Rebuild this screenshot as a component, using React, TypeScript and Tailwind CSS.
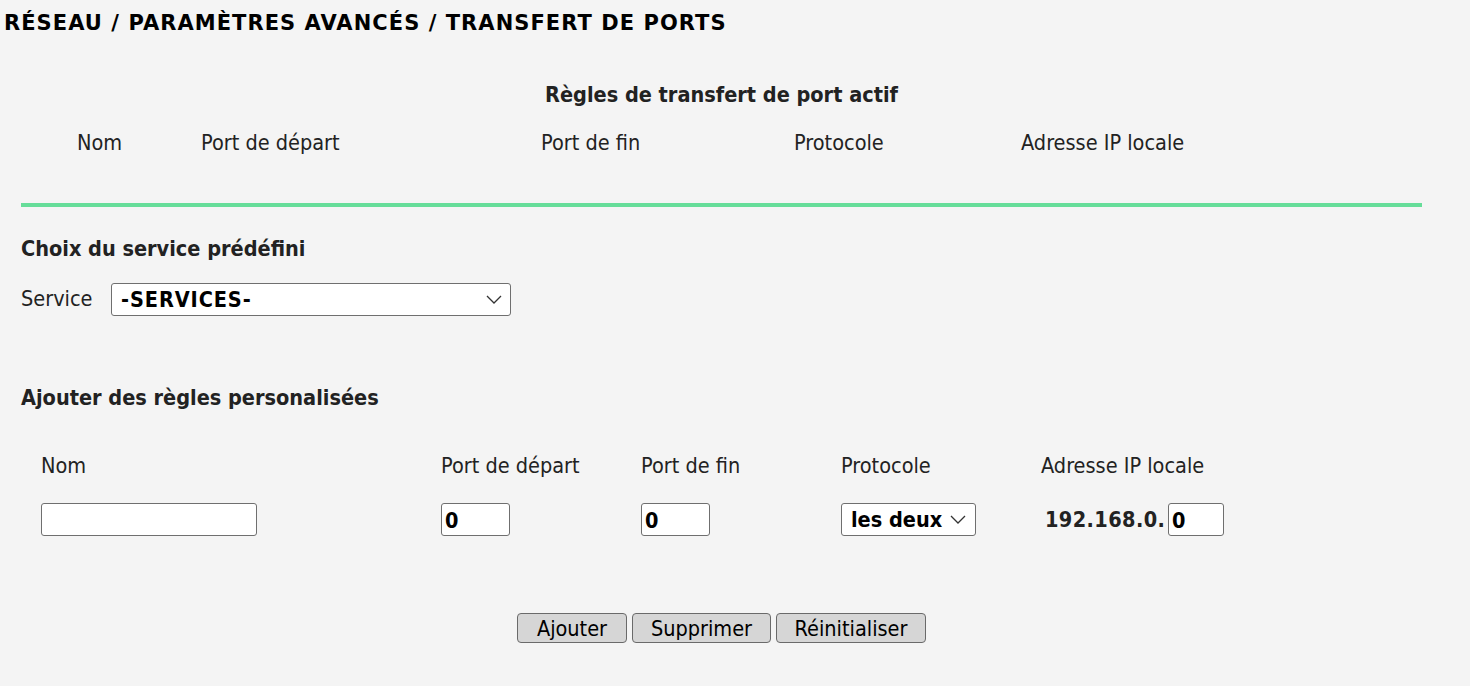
const font = "[font-family:'DejaVu_Sans_Condensed','DejaVu_Sans',sans-serif]";

function Chevron() {
  return (
    <svg width="16" height="9" viewBox="0 0 16 9" className="pointer-events-none">
      <path d="M1 1 L8 8 L15 1" fill="none" stroke="#333" strokeWidth="1.3" />
    </svg>
  );
}

function SelectBox({ value, width, pad, track }: { value: string; width: string; pad: string; track?: string }) {
  return (
    <div
      className={`flex h-[33px] items-center justify-between rounded-[3px] border border-[#6f6f6f] bg-white ${width} ${pad}`}
    >
      <span className={`pt-[1px] text-[21.5px] font-bold text-black ${track ?? ""}`}>{value}</span>
      <Chevron />
    </div>
  );
}

function TextBox({ value, width }: { value?: string; width: string }) {
  return (
    <input
      readOnly
      value={value ?? ""}
      className={`h-[33px] rounded-[3px] border border-[#6f6f6f] bg-white pl-[3px] pt-[1px] text-[21.5px] font-bold text-black outline-none ${width}`}
    />
  );
}

export default function App() {
  return (
    <div className={`min-h-[686px] w-full bg-[#f4f4f4] text-[#222] ${font}`}>
      <h1 className="pl-[4px] pt-[9px] text-[21px] font-bold leading-[28px] tracking-[1.05px] text-black [font-family:'DejaVu_Sans',sans-serif]">
        RÉSEAU / PARAMÈTRES AVANCÉS / TRANSFERT DE PORTS
      </h1>

      <div className="ml-[21px] w-[1401px]">
        {/* Active rules table */}
        <div className="mt-[44px] text-center text-[21.5px] font-bold leading-[28px]">
          Règles de transfert de port actif
        </div>
        <div className="mt-[20px] flex text-[21.5px] leading-[28px]">
          <div className="ml-[56px] w-[124px]">Nom</div>
          <div className="w-[340px]">Port de départ</div>
          <div className="w-[253px]">Port de fin</div>
          <div className="w-[227px]">Protocole</div>
          <div>Adresse IP locale</div>
        </div>

        <div className="mt-[46px] h-[4px] bg-[#66dd99]" />

        {/* Predefined service */}
        <div className="mt-[28px] text-[21.5px] font-bold leading-[28px]">Choix du service prédéfini</div>
        <div className="mt-[20px] flex items-center">
          <span className="w-[90px] text-[21.5px]">Service</span>
          <SelectBox value="-SERVICES-" width="w-[400px]" pad="pl-[9px] pr-[8px]" track="tracking-[0.9px]" />
        </div>

        {/* Custom rules */}
        <div className="mt-[68px] text-[21.5px] font-bold leading-[28px]">Ajouter des règles personalisées</div>
        <div className="mt-[40px] flex text-[21.5px] leading-[28px]">
          <div className="ml-[20px] w-[400px]">Nom</div>
          <div className="w-[200px]">Port de départ</div>
          <div className="w-[200px]">Port de fin</div>
          <div className="w-[200px]">Protocole</div>
          <div>Adresse IP locale</div>
        </div>
        <div className="mt-[23px] flex items-center">
          <div className="ml-[20px] w-[400px]">
            <TextBox width="w-[216px]" />
          </div>
          <div className="w-[200px]">
            <TextBox value="0" width="w-[69px]" />
          </div>
          <div className="w-[200px]">
            <TextBox value="0" width="w-[69px]" />
          </div>
          <div className="w-[204px]">
            <SelectBox value="les deux" width="w-[135px]" pad="pl-[9px] pr-[9px]" />
          </div>
          <div className="flex items-center">
            <span className="w-[123px] pt-[1px] text-[21.5px] font-bold tracking-[0.4px]">192.168.0.</span>
            <TextBox value="0" width="w-[56px]" />
          </div>
        </div>

        <div className="mt-[77px] flex justify-center gap-[5px]">
          {["Ajouter", "Supprimer", "Réinitialiser"].map((label, i) => (
            <button
              key={label}
              className={`h-[30px] rounded-[4px] border border-[#6a6a6a] bg-[#d6d6d6] pt-[1px] text-[21.5px] leading-none text-black ${
                i === 0 ? "w-[110px]" : i === 1 ? "w-[139px]" : "w-[150px]"
              }`}
            >
              {label}
            </button>
          ))}
        </div>
      </div>
    </div>
  );
}
